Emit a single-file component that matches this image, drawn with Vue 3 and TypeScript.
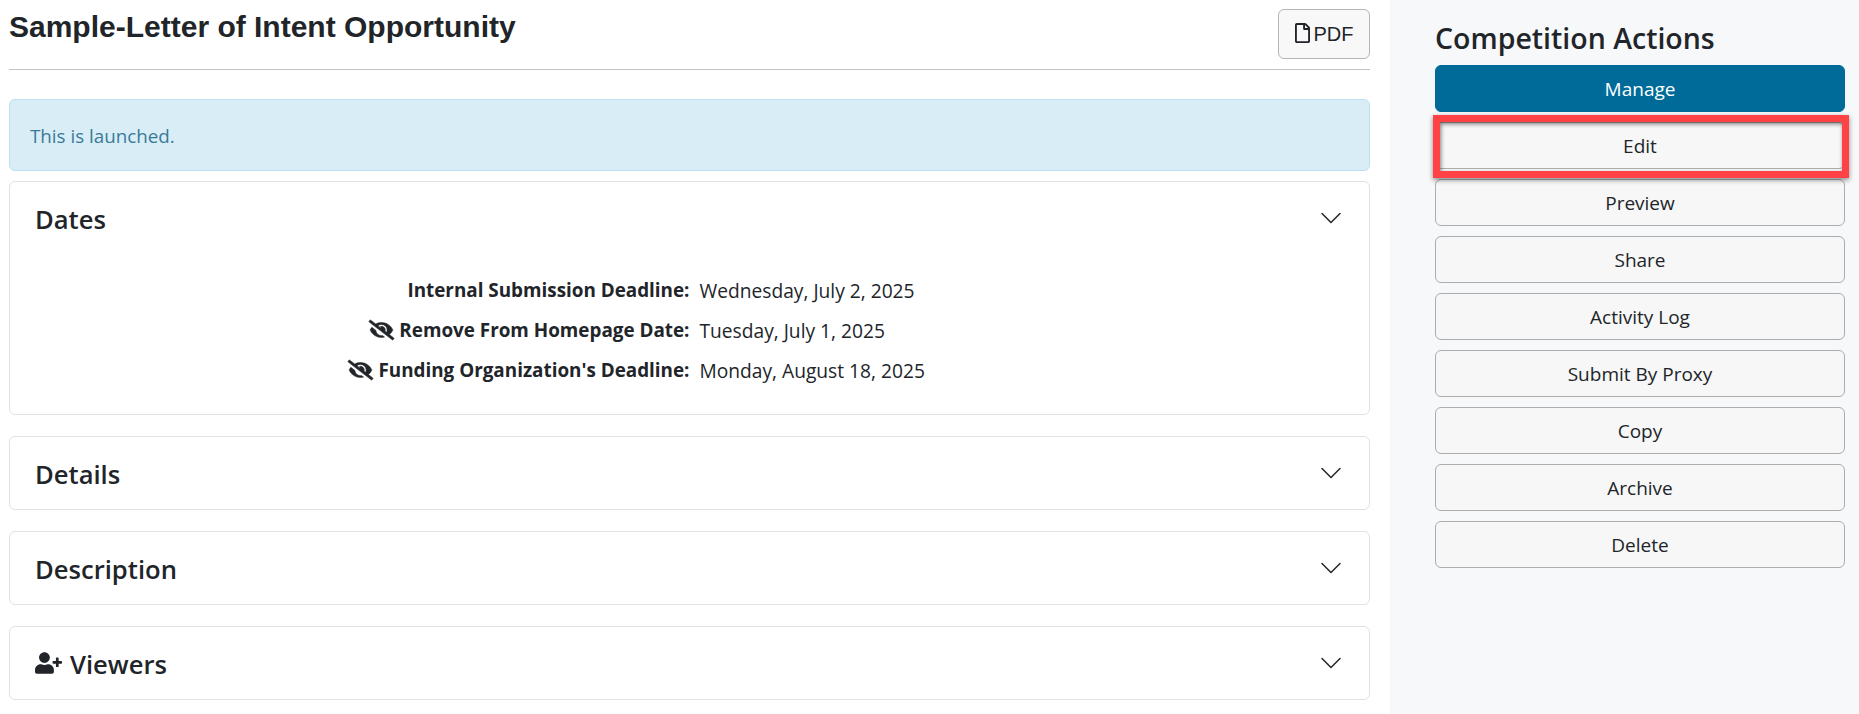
<script setup lang="ts">
const rows = [
  { label: 'Internal Submission Deadline:', value: 'Wednesday, July 2, 2025', hidden: false },
  { label: 'Remove From Homepage Date:', value: 'Tuesday, July 1, 2025', hidden: true },
  { label: "Funding Organization's Deadline:", value: 'Monday, August 18, 2025', hidden: true },
]
const collapsed = ['Details', 'Description']
const actions = ['Preview', 'Share', 'Activity Log', 'Submit By Proxy', 'Copy', 'Archive', 'Delete']
</script>

<template>
  <div class="page">
    <main class="main">
      <header class="title-row">
        <h1 class="title">Sample-Letter of Intent Opportunity</h1>
        <button class="pdf">
          <svg class="file" viewBox="0 0 384 512"><path fill="currentColor" d="M369.9 97.9L286 14C277 5 264.8-.1 252.1-.1H48C21.5 0 0 21.5 0 48v416c0 26.5 21.5 48 48 48h288c26.5 0 48-21.5 48-48V131.9c0-12.7-5.1-25-14.1-34zM332.1 128H256V51.9l76.1 76.1zM48 464V48h160v104c0 13.3 10.7 24 24 24h104v288H48z"/></svg>
          <span>PDF</span>
        </button>
      </header>
      <div class="alert">This is launched.</div>
      <section class="card first">
        <div class="card-head">
          <h2>Dates</h2>
          <svg class="chev" viewBox="0 0 16 16"><path fill="currentColor" fill-rule="evenodd" d="M1.646 4.646a.5.5 0 0 1 .708 0L8 10.293l5.646-5.647a.5.5 0 0 1 .708.708l-6 6a.5.5 0 0 1-.708 0l-6-6a.5.5 0 0 1 0-.708z"/></svg>
        </div>
        <div class="dates">
          <template v-for="r in rows" :key="r.label">
            <div class="label">
              <svg v-if="r.hidden" class="eye" viewBox="0 0 640 512"><path fill="currentColor" stroke="currentColor" stroke-width="14" d="M320 400c-75.85 0-137.25-58.71-142.9-133.11L72.2 185.82c-13.79 17.3-26.48 35.59-36.72 55.59a32.35 32.35 0 0 0 0 29.19C89.71 376.41 197.07 448 320 448c26.91 0 52.87-4 77.89-10.46L346 397.39a144.13 144.13 0 0 1-26 2.61zm313.82 58.1l-110.55-85.44a331.25 331.25 0 0 0 81.25-102.07 32.35 32.35 0 0 0 0-29.19C550.29 135.59 442.93 64 320 64a308.15 308.15 0 0 0-147.32 37.7L45.46 3.37A16 16 0 0 0 23 6.18L3.37 31.45A16 16 0 0 0 6.18 53.9l588.36 454.73a16 16 0 0 0 22.46-2.81l19.64-25.27a16 16 0 0 0-2.82-22.45zm-183.72-142l-39.3-30.38A94.75 94.75 0 0 0 416 256a94.76 94.76 0 0 0-121.31-92.21A47.65 47.65 0 0 1 304 192a46.64 46.64 0 0 1-1.54 10l-73.61-56.89A142.31 142.31 0 0 1 320 112a143.92 143.92 0 0 1 144 144c0 21.63-5.29 41.79-13.9 60.11z"/></svg>
              <span>{{ r.label }}</span>
            </div>
            <div class="value">{{ r.value }}</div>
          </template>
        </div>
      </section>
      <section v-for="c in collapsed" :key="c" class="card">
        <div class="card-head">
          <h2>{{ c }}</h2>
          <svg class="chev" viewBox="0 0 16 16"><path fill="currentColor" fill-rule="evenodd" d="M1.646 4.646a.5.5 0 0 1 .708 0L8 10.293l5.646-5.647a.5.5 0 0 1 .708.708l-6 6a.5.5 0 0 1-.708 0l-6-6a.5.5 0 0 1 0-.708z"/></svg>
        </div>
      </section>
      <section class="card">
        <div class="card-head">
          <h2 class="with-icon">
            <svg class="user" viewBox="0 0 640 512"><path fill="currentColor" d="M624 208h-64v-64c0-8.8-7.2-16-16-16h-32c-8.8 0-16 7.2-16 16v64h-64c-8.8 0-16 7.2-16 16v32c0 8.8 7.2 16 16 16h64v64c0 8.8 7.2 16 16 16h32c8.8 0 16-7.2 16-16v-64h64c8.8 0 16-7.2 16-16v-32c0-8.8-7.2-16-16-16zm-400 48c70.7 0 128-57.3 128-128S294.7 0 224 0 96 57.3 96 128s57.3 128 128 128zm89.6 32h-16.7c-22.2 10.2-46.9 16-72.9 16s-50.6-5.8-72.9-16h-16.7C60.2 288 0 348.2 0 422.4V464c0 26.5 21.5 48 48 48h352c26.5 0 48-21.5 48-48v-41.6c0-74.2-60.2-134.4-134.4-134.4z"/></svg>
            <span>Viewers</span>
          </h2>
          <svg class="chev" viewBox="0 0 16 16"><path fill="currentColor" fill-rule="evenodd" d="M1.646 4.646a.5.5 0 0 1 .708 0L8 10.293l5.646-5.647a.5.5 0 0 1 .708.708l-6 6a.5.5 0 0 1-.708 0l-6-6a.5.5 0 0 1 0-.708z"/></svg>
        </div>
      </section>
    </main>
    <aside class="side">
      <h3>Competition Actions</h3>
      <div class="actions">
        <button class="btn primary">Manage</button>
        <div class="edit-wrap">
          <button class="btn">Edit</button>
          <div class="highlight"></div>
        </div>
        <button v-for="a in actions" :key="a" class="btn">{{ a }}</button>
      </div>
    </aside>
  </div>
</template>

<style>
html, body { margin: 0; background: #fff; }
</style>

<style scoped>
.page {
  display: flex;
  width: 1859px;
  height: 714px;
  overflow: hidden;
  font-family: "Open Sans", "Noto Sans", sans-serif;
  color: #212529;
}
.main {
  width: 1390px;
  box-sizing: border-box;
  padding: 0 20px 0 9px;
  background: #fff;
  display: flex;
  flex-direction: column;
}
.title-row {
  display: flex;
  justify-content: space-between;
  align-items: flex-start;
  flex: none;
  height: 60px;
  padding-top: 9px;
  border-bottom: 1px solid #c4c4c4;
}
.title {
  margin: 0;
  font: bold 30px/36px "Liberation Sans", Arial, sans-serif;
}
.pdf {
  width: 92px;
  height: 50px;
  display: flex;
  align-items: center;
  justify-content: center;
  gap: 4px;
  background: #f8f8f8;
  border: 1px solid #b5b5b5;
  border-radius: 6px;
  color: #212529;
  font: 20px "Liberation Sans", Arial, sans-serif;
  padding: 0;
}
.file { width: 15px; height: 20px; margin-bottom: 2px; }
.alert {
  margin-top: 29px;
  height: 72px;
  flex: none;
  box-sizing: border-box;
  display: flex;
  align-items: center;
  padding: 2px 20px 0;
  background: #d9edf7;
  border: 1px solid #bcdff1;
  border-radius: 6px;
  color: #3a7a99;
  font-size: 18.8px;
}
.card {
  margin-top: 21px;
  height: 74px;
  flex: none;
  box-sizing: border-box;
  border: 1px solid #dfe2e6;
  border-radius: 6px;
  background: #fff;
}
.card.first { margin-top: 10px; height: 234px; }
.card-head {
  height: 72px;
  display: flex;
  align-items: center;
  justify-content: space-between;
  padding: 0 26px 0 25px;
}
.card-head h2 {
  margin: 0;
  padding-top: 4px;
  font-size: 25.6px;
  font-weight: 600;
  line-height: 32px;
}
.with-icon { display: flex; align-items: center; gap: 8px; }
.user { width: 27px; height: 22px; margin-bottom: 4px; }
.chev { width: 24px; height: 24px; color: #212529; }
.dates {
  display: grid;
  grid-template-columns: 1fr 1fr;
  grid-auto-rows: 40px;
  margin-top: 16px;
}
.label {
  display: flex;
  align-items: center;
  justify-content: flex-end;
  gap: 5px;
  font-size: 18.85px;
  font-weight: 700;
}
.value {
  display: flex;
  align-items: center;
  padding-left: 10px;
  font-size: 19.2px;
}
.eye { width: 25px; height: 20px; overflow: visible; }
.side {
  flex: 1;
  background: #f7f8fa;
  padding: 0 14px 0 45px;
  box-sizing: border-box;
}
.side h3 {
  margin: 0;
  height: 65px;
  font-size: 28.5px;
  font-weight: 600;
  line-height: 76px;
}
.actions { display: flex; flex-direction: column; gap: 10px; }
.btn {
  display: block;
  width: 100%;
  height: 47px;
  border: 1px solid #adadad;
  border-radius: 6px;
  background: #f7f7f7;
  color: #212529;
  font-family: inherit;
  font-size: 19px;
  padding: 0;
}
.primary { background: #006b99; border-color: #006b99; color: #fff; }
.edit-wrap { position: relative; }
.highlight {
  position: absolute;
  left: -2px;
  right: -4px;
  top: -7px;
  bottom: -9px;
  border: 7px solid #ff4246;
  box-shadow: 0 2px 5px rgba(0,0,0,.45), inset 1px 2px 4px rgba(0,0,0,.5);
  pointer-events: none;
}
</style>
